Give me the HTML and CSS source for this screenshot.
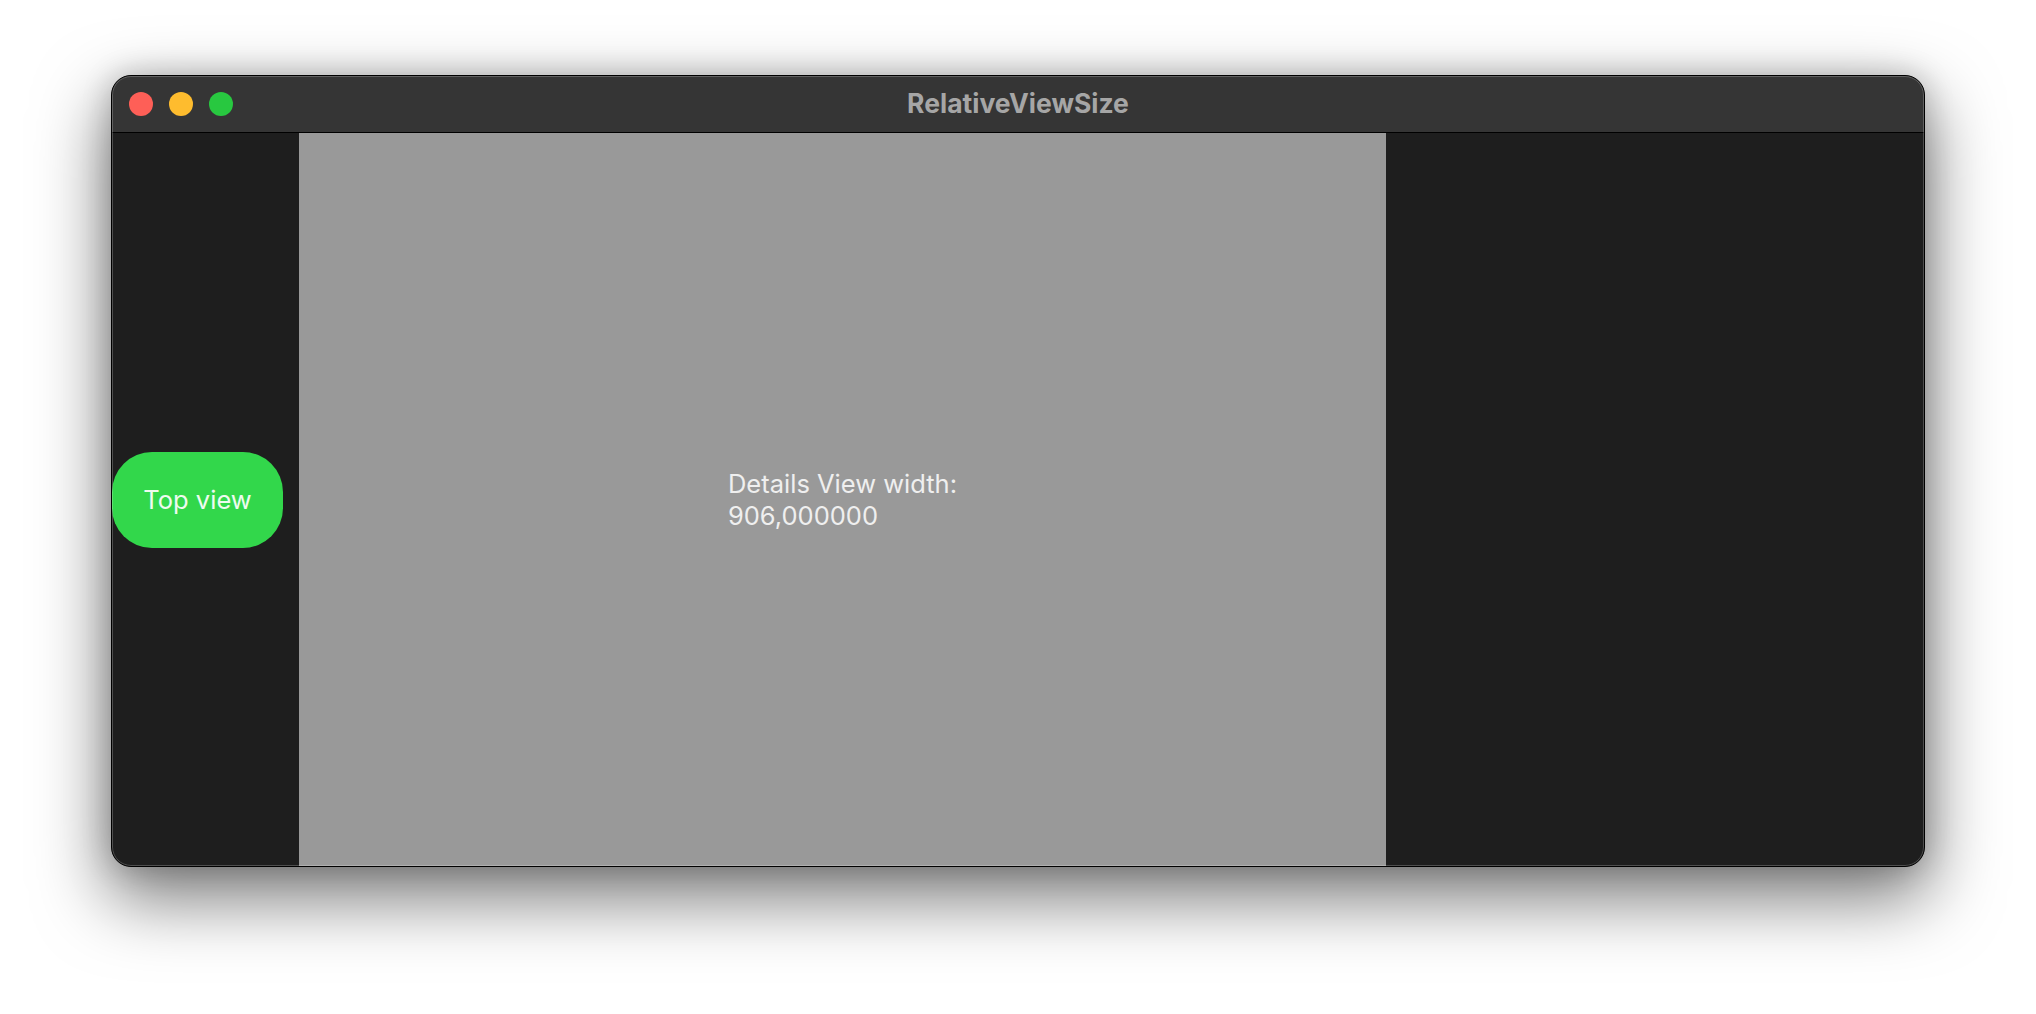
FILE: index.html
```html
<!DOCTYPE html>
<html>
<head>
<meta charset="utf-8">
<link rel="stylesheet" href="styles.css">
</head>
<body>
<div class="window">
  <div class="titlebar">
    <div class="lights">
      <span class="light red"></span>
      <span class="light yellow"></span>
      <span class="light green"></span>
    </div>
    <div class="title">RelativeViewSize</div>
  </div>
  <div class="content">
    <div class="sidebar">
      <div class="topview">Top view</div>
    </div>
    <div class="details">
      <div class="details-text">Details View width:<br>906,000000</div>
    </div>
    <div class="rest"></div>
  </div>
</div>
</body>
</html>
```

FILE: styles.css
```css
html, body {
  margin: 0;
  padding: 0;
  background: #ffffff;
}
body {
  width: 2036px;
  height: 1014px;
  overflow: hidden;
  padding: 75px 0 0 111px;
  box-sizing: border-box;
  font-family: Inter, "Noto Sans", "Liberation Sans", sans-serif;
}
.window {
  position: relative;
  width: 1814px;
  height: 792px;
  box-sizing: border-box;
  border: 1px solid #000;
  border-radius: 20px;
  overflow: hidden;
  display: flex;
  flex-direction: column;
  background: #1e1e1e;
  box-shadow: 0 28px 70px 4px rgba(0,0,0,0.52), 0 0 30px rgba(0,0,0,0.2);
}
.window::after {
  content: "";
  position: absolute;
  inset: 0;
  border: 1px solid rgba(255,255,255,0.22);
  border-radius: 19px;
  pointer-events: none;
}
.titlebar {
  height: 56px;
  flex: none;
  background: #353535;
  border-bottom: 1px solid #000;
  display: flex;
  align-items: center;
  position: relative;
}
.lights {
  display: flex;
  gap: 16px;
  padding-left: 17px;
}
.light {
  width: 24px;
  height: 24px;
  border-radius: 50%;
  display: block;
}
.red { background: #fe5f57; }
.yellow { background: #febc2e; }
.green { background: #28c840; }
.title {
  position: absolute;
  left: 0;
  right: 0;
  top: 0;
  bottom: 0;
  display: flex;
  align-items: center;
  justify-content: center;
  color: #a6a6a6;
  font-weight: 700;
  font-size: 26.5px;
  letter-spacing: 0;
  padding-bottom: 2px;
}
.content {
  flex: 1;
  display: flex;
}
.sidebar {
  width: 187px;
  flex: none;
  display: flex;
  align-items: center;
  background: #1e1e1e;
}
.topview {
  width: 171px;
  height: 96px;
  border-radius: 40px;
  background: #32d74b;
  color: #eefbf0;
  font-size: 25.5px;
  display: flex;
  align-items: center;
  justify-content: center;
}
.details {
  width: 1087px;
  flex: none;
  background: #999999;
  display: flex;
  align-items: center;
  justify-content: center;
}
.details-text {
  color: #efefef;
  font-size: 25.5px;
  line-height: 32px;
}
.rest {
  flex: 1;
  background: #1e1e1e;
}
```
